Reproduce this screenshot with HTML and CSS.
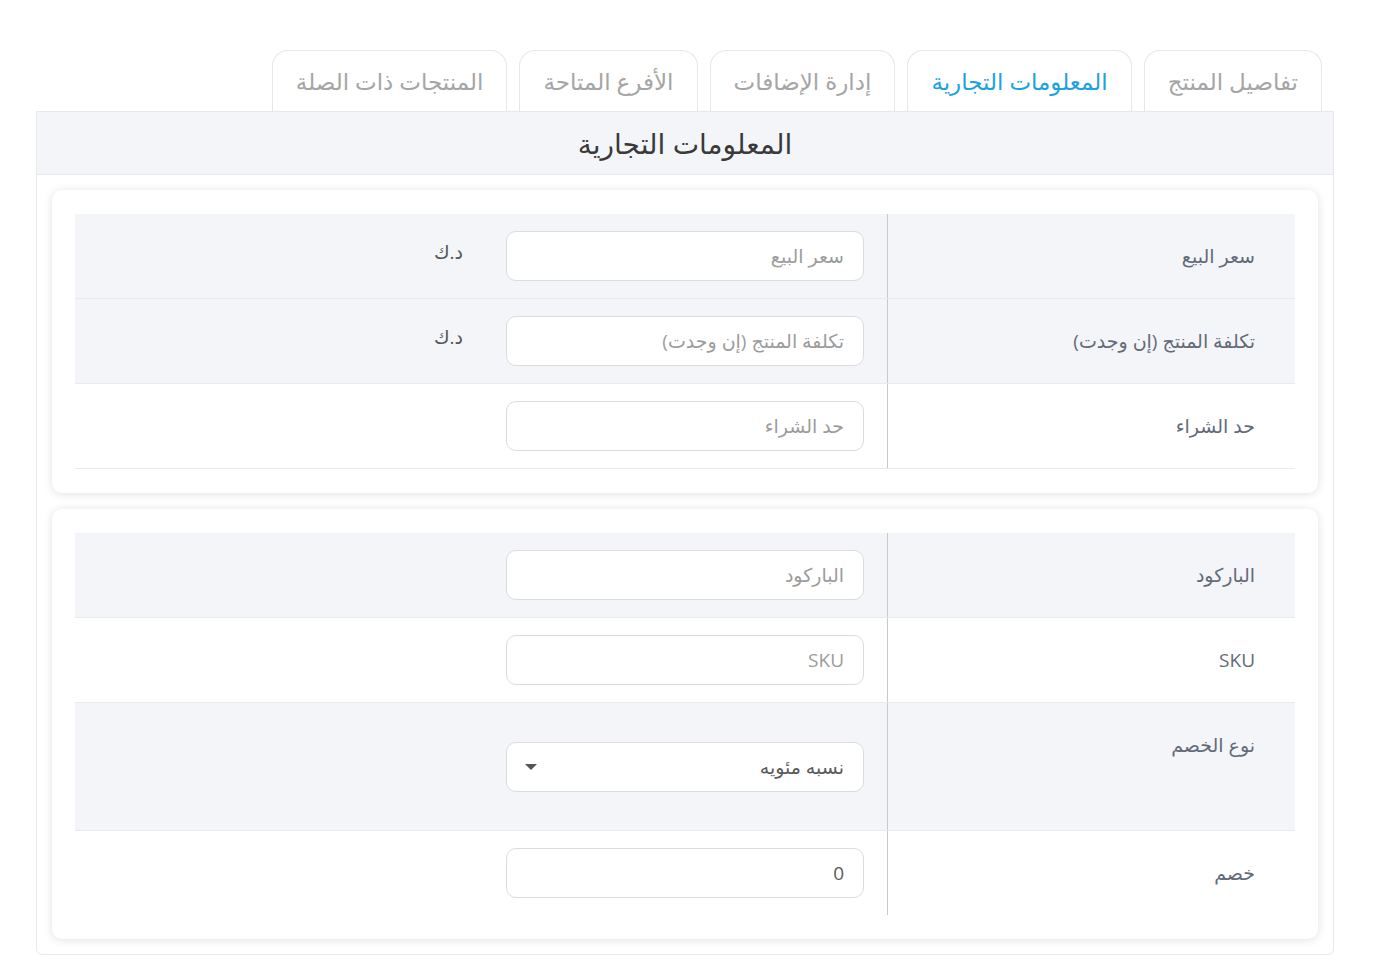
FILE: index.html
```html
<!DOCTYPE html>
<html lang="ar" dir="rtl">
<head>
	<meta charset="UTF-8">
	<title>المعلومات التجارية</title>
	<link rel="stylesheet" href="styles.css">
</head>
<body>
	<div class="page">
		<ul class="tabs">
			<li class="tab">تفاصيل المنتج</li>
			<li class="tab active">المعلومات التجارية</li>
			<li class="tab">إدارة الإضافات</li>
			<li class="tab">الأفرع المتاحة</li>
			<li class="tab">المنتجات ذات الصلة</li>
		</ul>

		<div class="panel">
			<div class="panel-head">المعلومات التجارية</div>
			<div class="panel-body">

				<div class="card">
					<div class="form-table">
						<div class="form-row shaded">
							<div class="cell-label">سعر البيع</div>
							<div class="cell-field">
								<input class="field" type="text" placeholder="سعر البيع">
								<span class="unit">د.ك</span>
							</div>
						</div>
						<div class="form-row shaded">
							<div class="cell-label">تكلفة المنتج (إن وجدت)</div>
							<div class="cell-field">
								<input class="field" type="text" placeholder="تكلفة المنتج (إن وجدت)">
								<span class="unit">د.ك</span>
							</div>
						</div>
						<div class="form-row">
							<div class="cell-label">حد الشراء</div>
							<div class="cell-field">
								<input class="field" type="text" placeholder="حد الشراء">
							</div>
						</div>
					</div>
				</div>

				<div class="card">
					<div class="form-table">
						<div class="form-row shaded">
							<div class="cell-label">الباركود</div>
							<div class="cell-field">
								<input class="field" type="text" placeholder="الباركود">
							</div>
						</div>
						<div class="form-row">
							<div class="cell-label">SKU</div>
							<div class="cell-field">
								<input class="field" type="text" placeholder="SKU">
							</div>
						</div>
						<div class="form-row shaded tall">
							<div class="cell-label top">نوع الخصم</div>
							<div class="cell-field">
								<div class="field select">
									<span>نسبه مئويه</span>
									<span class="caret"></span>
								</div>
							</div>
						</div>
						<div class="form-row last">
							<div class="cell-label">خصم</div>
							<div class="cell-field">
								<input class="field filled" type="text" value="0">
							</div>
						</div>
					</div>
				</div>

			</div>
		</div>
	</div>
</body>
</html>
```

FILE: styles.css
```css
html, body {
	margin: 0;
	padding: 0;
	background: #fff;
}
body {
	font-family: "Open Sans", "DejaVu Sans", sans-serif;
	color: #636a77;
}
.page {
	padding: 50px 39px 0 36px;
}

/* tabs */
.tabs {
	list-style: none;
	margin: 0 12px 0 0;
	padding: 0;
	display: flex;
	gap: 12px;
}
.tab {
	height: 60px;
	padding: 0 23px;
	display: flex;
	align-items: center;
	font-size: 23px;
	color: #a5a5a5;
	border: 1px solid #e6e6e6;
	border-bottom: none;
	border-radius: 16px 16px 0 0;
	background: #fff;
}
.tab.active {
	color: #1ea2df;
}

/* panel */
.panel {
	border: 1px solid #e8e8e8;
	border-radius: 0 0 6px 6px;
}
.panel-head {
	height: 62px;
	background: #f4f5f8;
	border-bottom: 1px solid #e8e8e8;
	display: flex;
	align-items: center;
	justify-content: center;
	font-size: 28px;
	color: #3a3a3a;
}
.panel-body {
	padding: 15px 15px 15px;
	display: flex;
	flex-direction: column;
	gap: 16px;
}
.card {
	background: #fff;
	border-radius: 10px;
	box-shadow: 0 1px 10px rgba(0, 0, 0, .12);
	padding: 24px 23px 24px;
}

/* rows */
.form-row {
	display: grid;
	grid-template-columns: 408px 1fr;
	min-height: 84px;
	border-bottom: 1px solid #e9eaed;
}
.form-row.shaded {
	background: #f4f5f8;
}
.form-row.tall {
	min-height: 127px;
}
.form-row.last {
	border-bottom: none;
	min-height: 84px;
}
.cell-label {
	padding-right: 40px;
	display: flex;
	align-items: center;
	font-size: 19px;
	border-left: 1px solid #c9c9c9;
}
.cell-label.top {
	align-items: flex-start;
	padding-top: 29px;
}
.cell-field {
	padding-right: 23px;
	display: flex;
	align-items: center;
}
.field {
	box-sizing: border-box;
	width: 358px;
	height: 50px;
	border: 1px solid #dcdcdc;
	border-radius: 10px;
	background: #fff;
	padding: 0 19px;
	font-family: inherit;
	font-size: 19px;
	color: #5a5a5a;
	outline: none;
}
.field::placeholder {
	color: #9c9c9c;
}
.select {
	display: flex;
	align-items: center;
	justify-content: space-between;
	padding-left: 18px;
}
.caret {
	width: 0;
	height: 0;
	border-left: 6px solid transparent;
	border-right: 6px solid transparent;
	border-top: 6px solid #555;
}
.unit {
	margin-right: 43px;
	font-size: 19px;
	color: #555;
	align-self: flex-start;
	margin-top: 25px;
}
```
